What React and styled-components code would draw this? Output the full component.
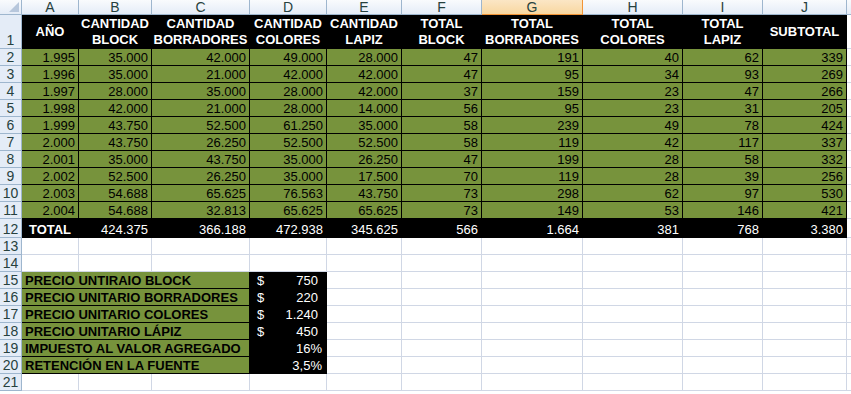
import React from "react";
import styled, { createGlobalStyle, css } from "styled-components";

// --------------------------------------------------

const Global = createGlobalStyle`
	html, body {
		margin: 0;
		padding: 0;
		background: #fff;
	}
	body {
		font-family: "Liberation Sans", Arial, sans-serif;
		font-size: 13px;
	}
`;

const colors = {
	green: "#77933c",
	grid: "#d0d7e5",
	headBorder: "#9eb6ce",
	headText: "#27413e",
};

const colWidths = [57, 73, 98, 77, 75, 80, 101, 100, 80, 84];
const letters = ["A", "B", "C", "D", "E", "F", "G", "H", "I", "J", "K"];

const headers = [
	["AÑO"],
	["CANTIDAD", "BLOCK"],
	["CANTIDAD", "BORRADORES"],
	["CANTIDAD", "COLORES"],
	["CANTIDAD", "LAPIZ"],
	["TOTAL", "BLOCK"],
	["TOTAL", "BORRADORES"],
	["TOTAL", "COLORES"],
	["TOTAL", "LAPIZ"],
	["SUBTOTAL"],
];

const data = [
	["1.995", "35.000", "42.000", "49.000", "28.000", "47", "191", "40", "62", "339"],
	["1.996", "35.000", "21.000", "42.000", "42.000", "47", "95", "34", "93", "269"],
	["1.997", "28.000", "35.000", "28.000", "42.000", "37", "159", "23", "47", "266"],
	["1.998", "42.000", "21.000", "28.000", "14.000", "56", "95", "23", "31", "205"],
	["1.999", "43.750", "52.500", "61.250", "35.000", "58", "239", "49", "78", "424"],
	["2.000", "43.750", "26.250", "52.500", "52.500", "58", "119", "42", "117", "337"],
	["2.001", "35.000", "43.750", "35.000", "26.250", "47", "199", "28", "58", "332"],
	["2.002", "52.500", "26.250", "35.000", "17.500", "70", "119", "28", "39", "256"],
	["2.003", "54.688", "65.625", "76.563", "43.750", "73", "298", "62", "97", "530"],
	["2.004", "54.688", "32.813", "65.625", "65.625", "73", "149", "53", "146", "421"],
];

const totals = ["424.375", "366.188", "472.938", "345.625", "566", "1.664", "381", "768", "3.380"];

const prices = [
	{ label: "PRECIO UNTIRAIO BLOCK", cur: true, value: "750" },
	{ label: "PRECIO UNITARIO BORRADORES", cur: true, value: "220" },
	{ label: "PRECIO UNITARIO COLORES", cur: true, value: "1.240" },
	{ label: "PRECIO UNITARIO LÁPIZ", cur: true, value: "450" },
	{ label: "IMPUESTO AL VALOR AGREGADO", cur: false, value: "16%" },
	{ label: "RETENCIÓN EN LA FUENTE", cur: false, value: "3,5%" },
];

// --------------------------------------------------

const Sheet = styled.div`
	display: grid;
	grid-template-columns: 22px ${colWidths.map(w => `${w}px`).join(" ")} 1fr;
	grid-template-rows: 15px 34px repeat(10, 17px) 19px repeat(9, 17px);
	width: 851px;
	height: 394px;
	overflow: hidden;
	color: #000;
`;

const headBg = css`
	background: linear-gradient(#f9fbfd, #e4ecf7);
	border-right: 1px solid ${colors.headBorder};
	border-bottom: 1px solid ${colors.headBorder};
`;

const Corner = styled.div`
	${headBg};
	position: relative;
	svg {
		position: absolute;
		right: 2px;
		bottom: 2px;
	}
`;

const ColHead = styled.div`
	${headBg};
	display: flex;
	align-items: center;
	justify-content: center;
	font-size: 14px;
	line-height: 14px;
	color: ${colors.headText};
	${p => p.active && css`
		background: linear-gradient(#fbe6c5, #f8d7a0);
		border-right-color: #f29436;
		border-bottom-color: #f29436;
	`}
`;

const RowHead = styled.div`
	${headBg};
	background: #e4ecf7;
	display: flex;
	align-items: flex-end;
	justify-content: center;
	font-size: 14px;
	line-height: 16px;
	color: ${colors.headText};
`;

const Cell = styled.div`
	box-sizing: border-box;
	display: flex;
	align-items: flex-end;
	justify-content: ${p => p.align || "flex-end"};
	padding: 0 3px 0 3px;
	line-height: 15px;
	white-space: nowrap;
	overflow: visible;
	border-right: 1px solid ${colors.grid};
	border-bottom: 1px solid ${colors.grid};
	${p => p.span && `grid-column: span ${p.span};`}
	${p => p.variant === "green" && css`
		background: ${colors.green};
		border-right-color: #000;
		border-bottom-color: #000;
	`}
	${p => p.variant === "black" && css`
		background: #000;
		color: #fff;
		border-right-color: #000;
		border-bottom-color: #000;
	`}
	${p => p.bold && "font-weight: bold;"}
`;

const HeadCell = styled(Cell)`
	align-items: center;
	justify-content: center;
	text-align: center;
	line-height: 16px;
	font-weight: bold;
	white-space: normal;
	padding: 0;
`;

const PriceCell = styled(Cell)`
	justify-content: space-between;
	padding: 0 ${p => p.pct ? 4 : 8}px 0 7px;
`;

// --------------------------------------------------

const CornerMark = () => (
	<svg width="10" height="10" viewBox="0 0 10 10">
		<polygon points="10,0 10,10 0,10" fill="#b7c7dc" />
	</svg>
);

const blankRow = (r, keyBase) => [
	<RowHead key={`${keyBase}h`}>{r}</RowHead>,
	...letters.map(l => <Cell key={`${keyBase}${l}`} />),
];

export default function App() {
	const cells = [];

	// column letters
	cells.push(<Corner key="corner"><CornerMark /></Corner>);
	letters.forEach(l =>
		cells.push(<ColHead key={`c${l}`} active={l === "G"}>{l === "K" ? "" : l}</ColHead>)
	);

	// row 1 headers
	cells.push(<RowHead key="r1">1</RowHead>);
	headers.forEach((h, i) =>
		cells.push(
			<HeadCell key={`h${i}`} variant="black">
				<span>{h.map((t, j) => <React.Fragment key={j}>{j > 0 && <br />}{t}</React.Fragment>)}</span>
			</HeadCell>
		)
	);
	cells.push(<Cell key="hK" />);

	// data rows
	data.forEach((row, r) => {
		cells.push(<RowHead key={`r${r + 2}`}>{r + 2}</RowHead>);
		row.forEach((v, c) => cells.push(<Cell key={`d${r}-${c}`} variant="green">{v}</Cell>));
		cells.push(<Cell key={`d${r}K`} />);
	});

	// totals
	cells.push(<RowHead key="r12">12</RowHead>);
	cells.push(<Cell key="tA" variant="black" bold align="center">TOTAL</Cell>);
	totals.forEach((v, c) => cells.push(<Cell key={`t${c}`} variant="black">{v}</Cell>));
	cells.push(<Cell key="tK" />);

	cells.push(...blankRow(13, "b13"));
	cells.push(...blankRow(14, "b14"));

	// prices
	prices.forEach((p, i) => {
		const r = 15 + i;
		cells.push(<RowHead key={`r${r}`}>{r}</RowHead>);
		cells.push(<Cell key={`p${r}l`} span={3} variant="green" bold align="flex-start">{p.label}</Cell>);
		cells.push(
			<PriceCell key={`p${r}v`} variant="black" pct={!p.cur}>
				<span>{p.cur ? "$" : ""}</span>
				<span>{p.value}</span>
			</PriceCell>
		);
		letters.slice(4).forEach(l => cells.push(<Cell key={`p${r}${l}`} />));
	});

	cells.push(...blankRow(21, "b21"));

	return (
		<>
			<Global />
			<Sheet>{cells}</Sheet>
		</>
	);
}
